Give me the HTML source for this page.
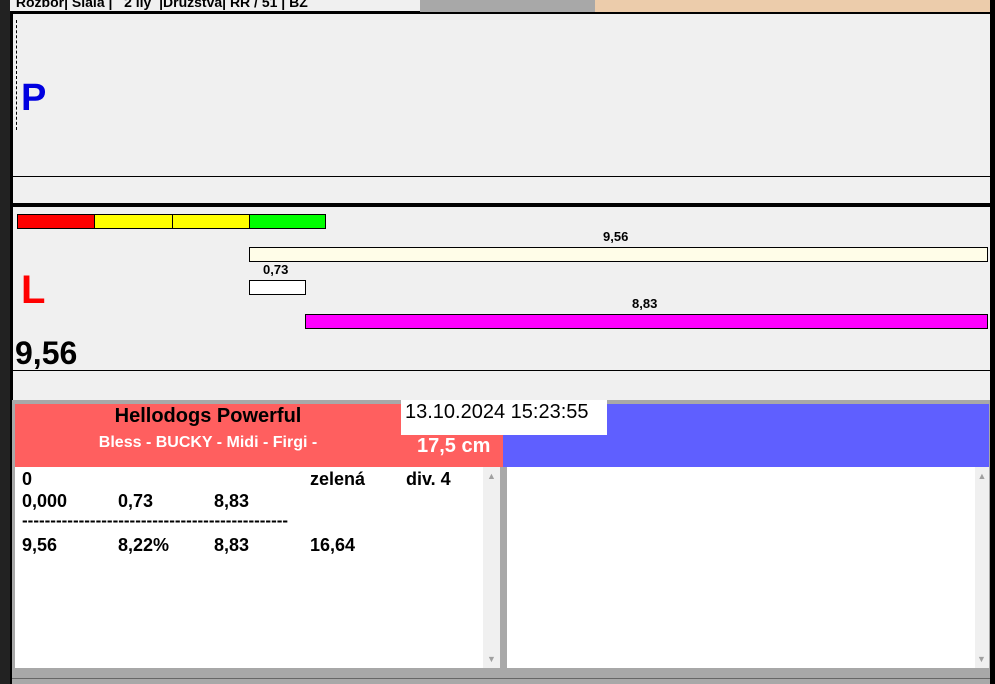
<!DOCTYPE html><html><head><meta charset="utf-8"><style>
body{margin:0;width:995px;height:684px;overflow:hidden;background:#000;position:relative;font-family:"Liberation Sans",Arial,sans-serif}
div{position:absolute;box-sizing:border-box}
.b{font-weight:bold}
</style></head><body>
<div style="left:0;top:0;width:10px;height:684px;background:#222"></div>
<div style="left:10px;top:0;width:410px;height:11px;background:#f0f0f0"></div>
<div style="left:420px;top:0;width:175px;height:12px;background:#a8a8a8"></div>
<div style="left:595px;top:0;width:395px;height:12px;background:#ecccab"></div>
<div style="left:12px;top:-6px;font-size:14px;" class="b">&nbsp;Rozbor| Slala |&nbsp;&nbsp; 2 ily&nbsp; |Družstva| RR / 51 | BZ</div>
<div style="left:11px;top:12px;width:979px;height:389px;background:#f0f0f0;border-left:2px solid #000;border-top:2px solid #000"></div>
<div style="left:16px;top:20px;width:1px;height:110px;border-left:1px dashed #000"></div>
<div style="left:21px;top:77px;color:#0000e0;font-size:38px" class="b">P</div>
<div style="left:12px;top:176px;width:978px;height:1px;background:#000"></div>
<div style="left:12px;top:203px;width:978px;height:4px;background:#000"></div>
<div style="left:17px;top:214px;width:78px;height:15px;background:#f00;border:1px solid #000"></div>
<div style="left:94px;top:214px;width:79px;height:15px;background:#ff0;border:1px solid #000"></div>
<div style="left:172px;top:214px;width:78px;height:15px;background:#ff0;border:1px solid #000"></div>
<div style="left:249px;top:214px;width:77px;height:15px;background:#0f0;border:1px solid #000"></div>
<div style="left:603px;top:229px;font-size:13px" class="b">9,56</div>
<div style="left:249px;top:247px;width:739px;height:15px;background:#fffde8;border:1px solid #000"></div>
<div style="left:263px;top:262px;font-size:13px" class="b">0,73</div>
<div style="left:249px;top:280px;width:57px;height:15px;background:#fff;border:1px solid #000"></div>
<div style="left:632px;top:296px;font-size:13px" class="b">8,83</div>
<div style="left:305px;top:314px;width:683px;height:15px;background:#f0f;border:1px solid #000"></div>
<div style="left:21px;top:268px;color:#f00;font-size:40px" class="b">L</div>
<div style="left:15px;top:335px;font-size:32px" class="b">9,56</div>
<div style="left:12px;top:370px;width:978px;height:1px;background:#000"></div>
<div style="left:12px;top:400px;width:978px;height:284px;background:#a8a8a8"></div>
<div style="left:15px;top:404px;width:488px;height:63px;background:#ff5f5f"></div>
<div style="left:503px;top:404px;width:486px;height:63px;background:#5f5fff"></div>
<div style="left:15px;top:403px;width:386px;text-align:center;font-size:20px;line-height:26px" class="b">Hellodogs Powerful</div>
<div style="left:15px;top:434px;width:386px;text-align:center;font-size:16px;color:#fff" class="b">Bless - BUCKY - Midi - Firgi -</div>
<div style="left:401px;top:400px;width:206px;height:35px;background:#fff;font-size:20px;padding:1px 0 0 4px">13.10.2024 15:23:55</div>
<div style="left:417px;top:435px;font-size:20px;color:#fff" class="b">17,5 cm</div>
<div style="left:15px;top:467px;width:468px;height:201px;background:#fff;font-size:18px;line-height:22px" class="b">
<div style="left:7px;top:1px">0</div><div style="left:295px;top:1px">zelená</div><div style="left:391px;top:1px">div. 4</div>
<div style="left:7px;top:23px">0,000</div><div style="left:103px;top:23px">0,73</div><div style="left:199px;top:23px">8,83</div>
<div style="left:7px;top:43px;font-size:17px">-----------------------------------------------</div>
<div style="left:7px;top:67px">9,56</div><div style="left:103px;top:67px">8,22%</div><div style="left:199px;top:67px">8,83</div><div style="left:295px;top:67px">16,64</div>
</div>
<div style="left:483px;top:467px;width:17px;height:201px;background:#f0f0f0;color:#a0a0a0;font-size:9px;text-align:center;line-height:18px">▲<div style="left:4px;top:183px">▼</div></div>
<div style="left:507px;top:467px;width:468px;height:201px;background:#fff"></div>
<div style="left:975px;top:467px;width:14px;height:201px;background:#f0f0f0;color:#a0a0a0;font-size:9px;text-align:center;line-height:18px">▲<div style="left:2px;top:183px">▼</div></div>
<div style="left:12px;top:678px;width:978px;height:1px;background:#666"></div>
</body></html>
